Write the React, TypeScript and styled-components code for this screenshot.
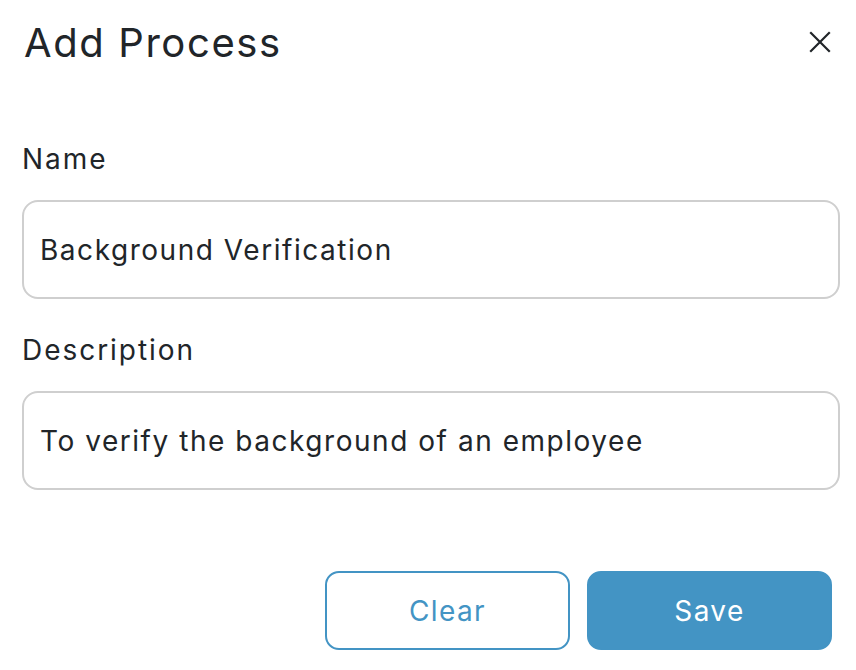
import React from 'react';
import styled, { createGlobalStyle } from 'styled-components';

const GlobalStyle = createGlobalStyle`
  html, body {
    margin: 0;
    padding: 0;
    background: #ffffff;
  }
  body {
    font-family: Inter, "Noto Sans", sans-serif;
    color: #212529;
  }
`;

const Dialog = styled.div`
  width: 856px;
  height: 670px;
  box-sizing: border-box;
  padding: 14px 24px 0 22px;
  display: flex;
  flex-direction: column;
`;

const Header = styled.div`
  display: flex;
  align-items: center;
  justify-content: space-between;
  height: 56px;
`;

const Title = styled.h1`
  margin: 0 0 0 2px;
  font-size: 40px;
  font-weight: 400;
  letter-spacing: 0.04em;
  color: #212529;
`;

const CloseButton = styled.button`
  border: none;
  background: none;
  padding: 0;
  margin-right: -2px;
  width: 28px;
  height: 28px;
  display: flex;
  align-items: center;
  justify-content: center;
  color: #212529;
  cursor: pointer;
`;

const Body = styled.div`
  display: flex;
  flex-direction: column;
  padding-top: 72px;
`;

const Field = styled.div`
  display: flex;
  flex-direction: column;
  gap: 24px;
  margin-bottom: 34px;
`;

const Label = styled.label`
  font-size: 28px;
  color: #212529;
  line-height: 34px;
  letter-spacing: 0.07em;
`;

const Input = styled.input`
  box-sizing: border-box;
  width: 818px;
  height: 99px;
  border: 2px solid #cfcfcf;
  border-radius: 16px;
  padding: 0 16px;
  font-family: inherit;
  font-size: 28px;
  letter-spacing: 0.055em;
  color: #212529;
  outline: none;
`;

const Footer = styled.div`
  display: flex;
  justify-content: flex-end;
  gap: 17px;
  margin-top: 47px;
`;

const Button = styled.button<{ $primary?: boolean }>`
  box-sizing: border-box;
  width: 245px;
  height: 79px;
  border-radius: 14px;
  font-family: inherit;
  font-size: 28px;
  letter-spacing: 0.05em;
  cursor: pointer;
  border: 2px solid #4394c4;
  background: ${p => (p.$primary ? '#4394c4' : '#ffffff')};
  color: ${p => (p.$primary ? '#ffffff' : '#4394c4')};
`;

export default function App() {
  return (
    <>
      <GlobalStyle />
      <Dialog>
        <Header>
          <Title>Add Process</Title>
          <CloseButton aria-label="Close">
            <svg width="22" height="22" viewBox="0 0 22 22" fill="none" stroke="currentColor" strokeWidth="2.2" strokeLinecap="square">
              <path d="M2 2 L20 20 M20 2 L2 20" />
            </svg>
          </CloseButton>
        </Header>
        <Body>
          <Field>
            <Label>Name</Label>
            <Input defaultValue="Background Verification" />
          </Field>
          <Field>
            <Label>Description</Label>
            <Input defaultValue="To verify the background of an employee" />
          </Field>
        </Body>
        <Footer>
          <Button>Clear</Button>
          <Button $primary>Save</Button>
        </Footer>
      </Dialog>
    </>
  );
}
